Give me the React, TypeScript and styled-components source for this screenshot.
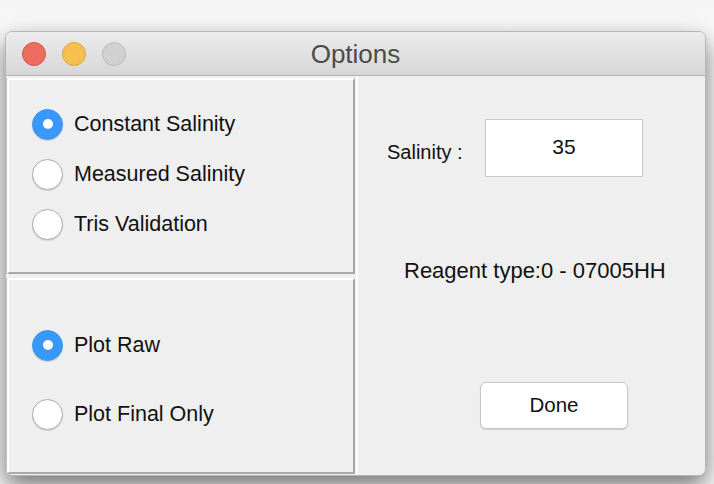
import {createGlobalStyle} from "styled-components";
import styled from "styled-components";

const GlobalStyle = createGlobalStyle`
  html, body {
    margin: 0;
    padding: 0;
    background: #f9f9f9;
    font-family: "Liberation Sans", Arial, Helvetica, sans-serif;
  }
  #root {
    width: 714px;
    height: 484px;
    overflow: hidden;
  }
`;

const Page = styled.div`
  width: 714px;
  height: 484px;
  padding: 31px 0 0 5px;
  box-sizing: border-box;
  background: linear-gradient(#f4f4f4, #fbfbfb 40px);
`;

const Window = styled.div`
  width: 701px;
  height: 445px;
  box-sizing: border-box;
  border: 1px solid #b6b6b6;
  border-radius: 7px;
  overflow: hidden;
  background: #efefef;
  display: flex;
  flex-direction: column;
  box-shadow: 0 10px 24px rgba(0, 0, 0, 0.55);
`;

const TitleBar = styled.div`
  height: 44px;
  flex: none;
  box-sizing: border-box;
  display: grid;
  grid-template-columns: 1fr auto 1fr;
  align-items: center;
  padding-left: 16px;
  background: linear-gradient(#ececec, #d6d6d6);
  border-bottom: 1px solid #b3b3b3;
`;

const Lights = styled.div`
  display: flex;
  gap: 16px;
`;

const Light = styled.span<{$fill: string; $edge: string}>`
  width: 24px;
  height: 24px;
  box-sizing: border-box;
  border-radius: 50%;
  background: ${(p) => p.$fill};
  border: 1px solid ${(p) => p.$edge};
`;

const Title = styled.div`
  font-size: 26px;
  color: #4b4b4b;
  padding-top: 1px;
  margin-left: -16px;
`;

const Body = styled.div`
  flex: 1;
  min-height: 0;
  display: flex;
`;

const LeftColumn = styled.div`
  width: 350px;
  flex: none;
  box-sizing: border-box;
  padding: 2px 1px 1px 1px;
  display: grid;
  grid-template-rows: 1fr 1fr;
  gap: 4px;
`;

const Panel = styled.div<{$top: number; $gap: number}>`
  box-sizing: border-box;
  border: 2px solid;
  border-color: #fff #a9a9a9 #a9a9a9 #fff;
  box-shadow: -1px 0 0 #bdbdbd;
  padding: ${(p) => p.$top}px 0 0 23px;
  display: flex;
  flex-direction: column;
  gap: ${(p) => p.$gap}px;
`;

const RadioRow = styled.label`
  height: 50px;
  flex: none;
  display: flex;
  align-items: center;
  gap: 11px;
  font-size: 21.5px;
  color: #111;
`;

const RadioDot = styled.span<{$on?: boolean}>`
  width: 31px;
  height: 31px;
  flex: none;
  box-sizing: border-box;
  border-radius: 50%;
  display: flex;
  align-items: center;
  justify-content: center;
  background: ${(p) => (p.$on ? "#3a98fb" : "#fff")};
  border: 1px solid ${(p) => (p.$on ? "#3a98fb" : "#acacac")};
  box-shadow: 0 1px 1px rgba(0, 0, 0, 0.12);

  &::after {
    content: "";
    display: ${(p) => (p.$on ? "block" : "none")};
    width: 10px;
    height: 10px;
    border-radius: 50%;
    background: #fff;
  }
`;

const RightPanel = styled.div`
  flex: 1;
  border-left: 2px solid #fff;
  display: flex;
  flex-direction: column;
  padding: 43px 0 0 29px;
`;

const FieldRow = styled.div`
  display: flex;
  align-items: center;
`;

const FieldLabel = styled.span`
  width: 98px;
  font-size: 20px;
  color: #111;
  padding-top: 9px;
`;

const TextField = styled.div`
  width: 158px;
  height: 58px;
  box-sizing: border-box;
  background: #fff;
  border: 1px solid #c9c9c9;
  display: flex;
  justify-content: center;
  padding-top: 15px;
  font-size: 21px;
  color: #111;
`;

const Info = styled.div`
  margin: 81px 0 0 17px;
  font-size: 22px;
  color: #111;
`;

const DoneButton = styled.button`
  margin: 98px 0 0 93px;
  width: 148px;
  height: 47px;
  background: #fff;
  border: 1px solid #c6c6c6;
  border-radius: 6px;
  box-shadow: 0 1px 1px rgba(0, 0, 0, 0.15);
  font-family: inherit;
  font-size: 20.5px;
  color: #111;
  padding: 0 0 2px;
`;

const Radio = ({label, on}: {label: string; on?: boolean}) => (
  <RadioRow>
    <RadioDot $on={on} />
    {label}
  </RadioRow>
);

export default function App() {
  return (
    <Page>
      <GlobalStyle />
      <Window>
        <TitleBar>
          <Lights>
            <Light $fill='#ee6b60' $edge='#d8564b' />
            <Light $fill='#f6c04f' $edge='#dba53d' />
            <Light $fill='#d1d1d1' $edge='#b9b9b9' />
          </Lights>
          <Title>Options</Title>
          <span />
        </TitleBar>
        <Body>
          <LeftColumn>
            <Panel $top={19} $gap={0}>
              <Radio label='Constant Salinity' on />
              <Radio label='Measured Salinity' />
              <Radio label='Tris Validation' />
            </Panel>
            <Panel $top={40} $gap={19}>
              <Radio label='Plot Raw' on />
              <Radio label='Plot Final Only' />
            </Panel>
          </LeftColumn>
          <RightPanel>
            <FieldRow>
              <FieldLabel>Salinity :</FieldLabel>
              <TextField>35</TextField>
            </FieldRow>
            <Info>Reagent type:0 - 07005HH</Info>
            <DoneButton>Done</DoneButton>
          </RightPanel>
        </Body>
      </Window>
    </Page>
  );
}
